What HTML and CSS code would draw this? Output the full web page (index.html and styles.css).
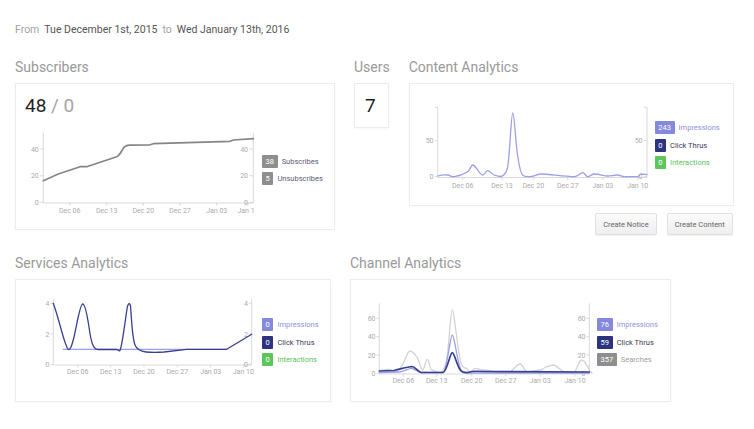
FILE: index.html
```html
<!DOCTYPE html>
<html>
<head>
<meta charset="utf-8">
<link rel="stylesheet" href="styles.css">
</head>
<body>
<div class="page">
  <div class="range">From<span class="d">Tue December 1st, 2015</span>to<span class="d">Wed January 13th, 2016</span></div>

  <div class="row top">
    <section class="sec sub">
      <h2>Subscribers</h2>
      <div class="card card-sub">
        <div class="count"><span class="main">48</span><span class="muted"> / 0</span></div>
        <div class="chart-row">
          <svg class="chart" width="231" height="88" viewBox="0 0 231 88">
            <path class="ax" d="M19.3 4.7V75H229.3V4.7"/>
            <path class="ax" d="M16.3 21H19.3M16.3 47.75H19.3M16.3 74.5H19.3M225.3 21H229.3M225.3 47.75H229.3M225.3 74.5H229.3M45.7 75V77.5M82.7 75V77.5M119.3 75V77.5M156 75V77.5M192.7 75V77.5M224 75V77.5"/>
            <text class="tl" x="14.8" y="23.5">40</text>
            <text class="tl" x="14.8" y="50.2">20</text>
            <text class="tl" x="14.8" y="77">0</text>
            <text class="tl" x="224" y="23.5">40</text>
            <text class="tl" x="224" y="50.2">20</text>
            <text class="tl" x="224" y="77">0</text>
            <text class="tx" x="45.7" y="84.5">Dec 06</text>
            <text class="tx" x="82.7" y="84.5">Dec 13</text>
            <text class="tx" x="119.3" y="84.5">Dec 20</text>
            <text class="tx" x="156" y="84.5">Dec 27</text>
            <text class="tx" x="192.7" y="84.5">Jan 03</text>
            <text class="tx" x="224" y="84.5">Jan 10</text>
            <path class="ln ln-sub" d="M19.3 52.7 L34.3 46 L56 38.7 L62.7 38.7 L92.7 28.7 C96.5 27.3 98 21 100.5 18.8 C102 17.5 103.5 17.3 105.5 17.2 L126 16.8 L129.3 15.7 L206 13.3 L209.3 12 L229.3 10.7"/>
          </svg>
          <div class="legend lg-sub">
            <div class="item"><span class="badge b-gray">38</span><span class="lbl l-sub">Subscribes</span></div>
            <div class="item"><span class="badge b-gray">5</span><span class="lbl l-sub">Unsubscribes</span></div>
          </div>
        </div>
      </div>
    </section>

    <section class="sec users">
      <h2>Users</h2>
      <div class="card card-users"><span class="main">7</span></div>
    </section>

    <section class="sec content">
      <h2>Content Analytics</h2>
      <div class="card card-content">
        <svg class="chart" width="232" height="90" viewBox="0 0 232 90">
          <path class="ax" d="M18.7 7.3V77.5H228V7.3"/>
          <path class="ax" d="M15.7 7.3H18.7M15.7 40.7H18.7M15.7 76.7H18.7M224.5 7.3H228M224.5 40.7H228M224.5 76.7H228M43.7 77.5V80M83 77.5V80M114.3 77.5V80M148.7 77.5V80M183.7 77.5V80M218.7 77.5V80"/>
          <text class="tl" x="14.5" y="43.2">50</text>
          <text class="tl" x="14.5" y="79.2">0</text>
          <text class="tl" x="223.5" y="43.2">50</text>
          <text class="tl" x="223.5" y="79.2">0</text>
          <text class="tx" x="43.7" y="87.5">Dec 06</text>
          <text class="tx" x="83" y="87.5">Dec 13</text>
          <text class="tx" x="114.3" y="87.5">Dec 20</text>
          <text class="tx" x="148.7" y="87.5">Dec 27</text>
          <text class="tx" x="183.7" y="87.5">Jan 03</text>
          <text class="tx" x="218.7" y="87.5">Jan 10</text>
          <path class="ln ln-imp" d="M18.7 76 C22 75 25 74.5 28.7 75 C31 75.5 33 77 35.3 76.7 C40 76 45 74 48.7 71.7 C51 70 52 65 53.7 65 C55.5 65 57 68 58.7 70 C60 72 62 75 63.7 75 C65.5 75 67 70.7 68.7 70.7 C71 70.7 73 74.5 75.3 75 C78 76 80 76.7 82 76.5 C85 76 87 73 88.5 68 C91 55 92 13 93.8 13 C95.5 13 96.5 45 99 58 C100.5 68 102 74 104 75.5 C106 76.7 109 76.7 112 76.5 C116 76 119 74 122 74 C130 74 145 76.7 155.3 76.7 C159 76.7 161 72.7 163.7 72.7 C166 72.7 166.5 76.7 168.7 76.7 C171 76.7 173 74 175.3 74 C180 74 185 76 188.7 76 C192 76 195 75 198.7 75 C201 75 203 76.7 205.3 76.7 L218.7 76.7 C220 76.7 220.5 74 222 74 L228 74.7"/>
        </svg>
        <div class="legend lg-content">
          <div class="item"><span class="badge b-imp">243</span><span class="lbl l-imp">Impressions</span></div>
          <div class="item"><span class="badge b-click">0</span><span class="lbl l-click">Click Thrus</span></div>
          <div class="item"><span class="badge b-int">0</span><span class="lbl l-int">Interactions</span></div>
        </div>
      </div>
      <div class="actions">
        <span class="btn">Create Notice</span>
        <span class="btn">Create Content</span>
      </div>
    </section>
  </div>

  <div class="row bottom">
    <section class="sec services">
      <h2>Services Analytics</h2>
      <div class="card card-services">
        <svg class="chart" width="232" height="86" viewBox="0 0 232 86">
          <path class="ax" d="M29.3 7V73H227.7V7"/>
          <path class="ax" d="M26.3 11.3H29.3M26.3 42H29.3M26.3 72.3H29.3M224.7 11.3H227.7M224.7 42H227.7M224.7 72.3H227.7M53.7 73V75.5M86.7 73V75.5M120 73V75.5M153.3 73V75.5M186.7 73V75.5M219.3 73V75.5"/>
          <text class="tl" x="25.5" y="13.8">4</text>
          <text class="tl" x="25.5" y="44.5">2</text>
          <text class="tl" x="25.5" y="74.8">0</text>
          <text class="tl" x="224" y="13.8">4</text>
          <text class="tl" x="224" y="44.5">2</text>
          <text class="tl" x="224" y="74.8">0</text>
          <text class="tx" x="53.7" y="82">Dec 06</text>
          <text class="tx" x="86.7" y="82">Dec 13</text>
          <text class="tx" x="120" y="82">Dec 20</text>
          <text class="tx" x="153.3" y="82">Dec 27</text>
          <text class="tx" x="186.7" y="82">Jan 03</text>
          <text class="tx" x="219.3" y="82">Jan 10</text>
          <path class="ln ln-imp" d="M39.3 57.3 L202.7 57.3"/>
          <path class="ln ln-click" d="M29.3 11.3 C36 30 41 56 44.5 57.5 C46.5 58 48 53 50 45 C53 32 56 12 58.7 12 C61 12 63 22 65 35 C67 50 69 57 74 57.5 L92.5 57.3 C94 57.5 95 59.5 96 58.5 C98 55 101 30 103 17 C104 11 105.5 10 106.5 14 C107.5 25 108 45 111 53 C113 58 117 59.5 122 60 C127 60.5 132 60.7 140 60 L162.7 57.3 L202.7 57.3 L227.7 42.3"/>
        </svg>
        <div class="legend lg-services">
          <div class="item"><span class="badge b-imp">0</span><span class="lbl l-imp">Impressions</span></div>
          <div class="item"><span class="badge b-click">0</span><span class="lbl l-click">Click Thrus</span></div>
          <div class="item"><span class="badge b-int">0</span><span class="lbl l-int">Interactions</span></div>
        </div>
      </div>
    </section>

    <section class="sec channel">
      <h2>Channel Analytics</h2>
      <div class="card card-channel">
        <svg class="chart" width="234" height="94" viewBox="0 0 234 94">
          <path class="ax" d="M20.3 11.3V82H230.3V11.3"/>
          <path class="ax" d="M17.3 26.3H20.3M17.3 44.7H20.3M17.3 63H20.3M17.3 81.3H20.3M227.3 26.3H230.3M227.3 44.7H230.3M227.3 63H230.3M227.3 81.3H230.3M44.3 82V84.5M77.7 82V84.5M112.7 82V84.5M146.7 82V84.5M181 82V84.5M216 82V84.5"/>
          <text class="tl" x="16.5" y="28.8">60</text>
          <text class="tl" x="16.5" y="47.2">40</text>
          <text class="tl" x="16.5" y="65.5">20</text>
          <text class="tl" x="16.5" y="83.8">0</text>
          <text class="tl" x="226.5" y="28.8">60</text>
          <text class="tl" x="226.5" y="47.2">40</text>
          <text class="tl" x="226.5" y="65.5">20</text>
          <text class="tl" x="226.5" y="83.8">0</text>
          <text class="tx" x="44.3" y="91">Dec 06</text>
          <text class="tx" x="77.7" y="91">Dec 13</text>
          <text class="tx" x="112.7" y="91">Dec 20</text>
          <text class="tx" x="146.7" y="91">Dec 27</text>
          <text class="tx" x="181" y="91">Jan 03</text>
          <text class="tx" x="216" y="91">Jan 10</text>
          <path class="ln ln-search" d="M20.3 78.7 C25 78 28 77 31 77.3 C34 77.6 35.5 80 37.7 79.7 C40 79 42 75 44.3 71.3 C46.5 67 48.5 59 51 59 C53.5 59 55.5 62 57.7 64.7 C60 68 62 78 63.7 78 C65.5 78 66.5 67.3 68.3 67.3 C70 67.3 71 78 72.7 78 C75 78.5 78 80.7 81 80.7 C84 80.7 86 75 87.7 68 C90 55 91.5 18 93.3 18 C95 18 96 35 97.7 44.7 C99 55 100.5 68 102.7 73 C104.5 76 106 76.3 107.7 76.3 C109 76.3 110 82 111 82 C112.5 82 114 76.3 116 76.3 C119 76.3 121 78 124.3 78 C132 78.5 140 81.3 147.7 81.3 C153 81.3 157 72 161 72 C164 72 165.5 79.7 167.7 79.7 C172 79.7 177 78 181 78 C184 78 185.5 74.7 187.7 74.7 C190 74.7 192 73 194.3 73 C198 73 203 80.7 207.7 80.7 L214.3 81.3 C217 81.3 219.5 68 222.7 68 C225.5 68 228 73 230.3 78 L233 81"/>
          <path class="ln ln-imp" d="M20.3 80.5 L40 80 C45 80 50 76 53 76.5 C56 77 58 80 62 80.5 L84 80.5 C88 80 91 43 93.3 43 C95.5 43 98 70 102 78 C104 80.5 107 81 112 81 L230.3 81"/>
          <path class="ln ln-click ln-thick" d="M20.3 79 L35 78.5 C42 77 48 75 53 74.5 C56 74.5 58 79 62 80.5 L84 80.5 C88 80 91 60.7 93.3 60.7 C95.5 60.7 98 75 102 79 C104 81 106 81 109 80.5 C112 79 118 79 125 79.5 L230.3 80"/>
        </svg>
        <div class="legend lg-channel">
          <div class="item"><span class="badge b-imp">76</span><span class="lbl l-imp">Impressions</span></div>
          <div class="item"><span class="badge b-click">59</span><span class="lbl l-click">Click Thrus</span></div>
          <div class="item"><span class="badge b-gray">357</span><span class="lbl l-search">Searches</span></div>
        </div>
      </div>
    </section>
  </div>
</div>
</body>
</html>
```

FILE: styles.css
```css
* { box-sizing: border-box; }
body {
  margin: 0;
  background: #fff;
  font-family: Roboto, "Liberation Sans", Arial, sans-serif;
}
.page {
  padding: 23px 0 20px 15px;
}
.range {
  font-size: 10.5px;
  line-height: 13px;
  color: #a3a3a3;
}
.range .d {
  color: #555;
  margin: 0 5px;
}
.row {
  display: flex;
  align-items: flex-start;
  gap: 19px;
}
.row.top { margin-top: 23px; }
.row.bottom { margin-top: 20px; }
.sec h2 {
  margin: 0 0 8px;
  font-size: 14px;
  line-height: 16px;
  font-weight: 400;
  color: #9a9a9a;
  white-space: nowrap;
}
.card {
  border: 1px solid #ececec;
  background: #fff;
  box-shadow: 0 1px 2px rgba(0, 0, 0, 0.03);
}
.main { color: #1f1f1f; }
.muted { color: #a5a5a5; }

.card-sub {
  width: 320px;
  height: 147px;
  padding: 11px 0 0 8px;
}
.count {
  font-size: 19px;
  line-height: 22px;
  padding-left: 1px;
}
.chart-row {
  display: flex;
  align-items: flex-start;
  margin-top: 11px;
}
.chart { display: block; flex: none; overflow: hidden; }

.card-users {
  width: 35px;
  height: 45px;
  padding: 11px 0 0 10px;
  font-size: 19px;
  line-height: 22px;
}

.card-content {
  width: 325px;
  height: 123px;
  padding: 16px 0 0 9px;
  display: flex;
  align-items: flex-start;
}
.card-services {
  width: 316px;
  height: 123px;
  padding: 12px 0 0 8px;
  display: flex;
  align-items: flex-start;
}
.card-channel {
  width: 321px;
  height: 123px;
  padding: 12px 0 0 8px;
  display: flex;
  align-items: flex-start;
}

.legend {
  display: flex;
  flex-direction: column;
  gap: 4.5px;
}
.lg-sub { margin-left: 7px; padding-top: 26.5px; }
.lg-content { margin-left: 4px; padding-top: 21px; }
.lg-services { margin-left: 6px; padding-top: 26px; }
.lg-channel { margin-left: 4px; padding-top: 26px; }

.item {
  display: flex;
  align-items: center;
  height: 13px;
  white-space: nowrap;
}
.badge {
  height: 13px;
  line-height: 13px;
  padding: 0 3.6px;
  font-size: 7.5px;
  color: #fff;
  border-radius: 1px;
  text-align: center;
}
.lbl {
  font-size: 7.5px;
  margin-left: 4px;
}
.b-gray { background: #8e8e8e; }
.b-imp { background: #8489dc; }
.b-click { background: #2c3480; }
.b-int { background: #5cc65c; }
.l-sub { color: #5a5a78; }
.l-imp { color: #8d91e0; }
.l-click { color: #3a3b55; }
.l-int { color: #5cbf5c; }
.l-search { color: #a0a0a0; }

.actions {
  display: flex;
  justify-content: flex-end;
  gap: 10px;
  margin-top: 7px;
  padding-right: 1px;
}
.btn {
  display: inline-flex;
  align-items: center;
  height: 22px;
  padding: 0 7px;
  font-size: 7.5px;
  color: #666;
  border: 1px solid #e0e0e0;
  border-radius: 2px;
  background: linear-gradient(#fbfbfb, #efefef);
  box-shadow: 0 1px 1px rgba(0, 0, 0, 0.06);
  white-space: nowrap;
}

/* chart parts */
.ax {
  fill: none;
  stroke: #cfcfcf;
  stroke-width: 0.8;
}
.chart text {
  font-family: Roboto, "Liberation Sans", Arial, sans-serif;
  font-size: 7px;
  fill: #ababab;
}
.chart .tl { text-anchor: end; }
.chart .tx { text-anchor: middle; }
.ln {
  fill: none;
  stroke-width: 1.3;
  stroke-linejoin: round;
  stroke-linecap: round;
}
.ln-sub { stroke: #858585; stroke-width: 1.7; }
.ln-imp { stroke: #9ca0ea; }
.ln-click { stroke: #383f90; }
.ln-thick { stroke-width: 1.7; }
.ln-search { stroke: #d2d2d2; }
```
